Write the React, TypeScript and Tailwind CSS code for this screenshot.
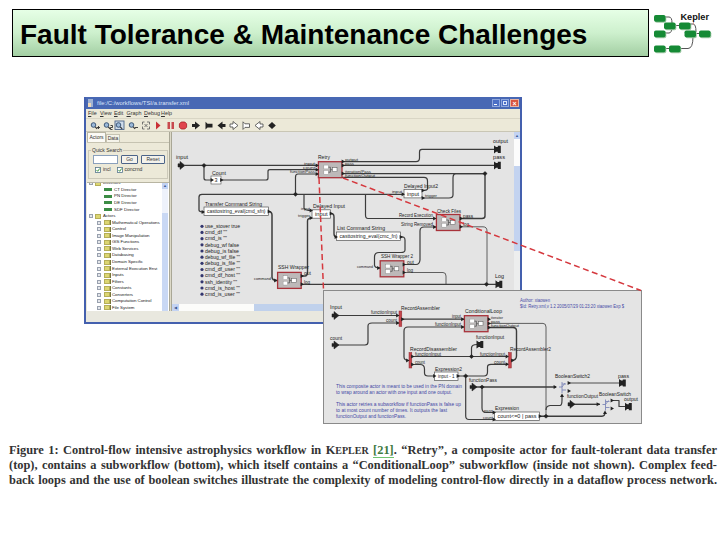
import type { ReactNode } from 'react';

const FONT = '"Liberation Sans", Arial, sans-serif';

/* ---------- diagram primitives ---------- */

interface LabelProps {
    x: number;
    y: number;
    w: number;
    children: string;
    size?: number;
    fill?: string;
}

// Text squeezed or stretched to a given width
const Label = ({ x, y, w, children, size = 5.4, fill = '#222' }: LabelProps) => (
    <text x={x} y={y} fontSize={size} fill={fill} fontFamily={FONT} textLength={w} lengthAdjust="spacingAndGlyphs">
        {children}
    </text>
);

const Wire = ({ d, w = 1.2 }: { d: string; w?: number }) => (
    <path d={d} fill="none" stroke="#3c3c3c" strokeWidth={w} strokeLinejoin="round" />
);

const Dot = ({ x, y }: { x: number; y: number }) => (
    <path d={`M${x - 2.2} ${y}l2.2 -2 2.2 2 -2.2 2z`} fill="#222" stroke="#222" strokeWidth="0.5" />
);

const Arrow = ({ x, y }: { x: number; y: number }) => (
    <path d={`M${x} ${y}l-3.4 -2v4z`} fill="#222" />
);

// Input port of a workflow
const Source = ({ x, y }: { x: number; y: number }) => (
    <path d={`M${x - 3} ${y - 1.6}h2v-2.4l5 4 -5 4v-2.4h-2z`} fill="#222" stroke="#222" strokeWidth="0.5" />
);

// Output port of a workflow
const Sink = ({ x, y }: { x: number; y: number }) => (
    <path d={`M${x - 0.5} ${y - 4}l2.2 1.6h1.600v-1.200h3v7.200h-3v-1.200h-1.600l-2.200 1.600z`} fill="#222" />
);

const Composite = ({ x, y }: { x: number; y: number }) => (
    <g>
        <rect x={x} y={y} width="23.6" height="16" fill="#bdb9b9" stroke="#a8323a" strokeWidth="1.3" />
        <path d={`M${x + 9} ${y + 5.5}h3v5h-3M${x + 12} ${y + 8}h3`} fill="none" stroke="#555" strokeWidth="0.8" />
        <rect x={x + 5.5} y={y + 3.4} width="4.4" height="3.8" fill="#fff" stroke="#777" strokeWidth="0.3" />
        <rect x={x + 5.5} y={y + 8.8} width="4.4" height="3.8" fill="#fff" stroke="#777" strokeWidth="0.3" />
        <rect x={x + 14} y={y + 6} width="4.6" height="4" fill="#fff" stroke="#555" strokeWidth="0.5" />
    </g>
);

const ValueBox = ({ x, y, w, text, pad = 3 }: { x: number; y: number; w: number; text: string; pad?: number }) => (
    <g>
        <rect x={x} y={y} width={w} height="8.4" fill="#fff" stroke="#555" strokeWidth="0.7" />
        <Label x={x + pad} y={y + 6} w={w - pad * 2} size={5}>{text}</Label>
    </g>
);

const RecordBar = ({ x, y }: { x: number; y: number }) => (
    <rect x={x} y={y} width="2.8" height="15.5" fill="#c5454c" stroke="#8e2b30" strokeWidth="0.5" />
);

const Switch = ({ x, y }: { x: number; y: number }) => (
    <path d={`M${x} ${y}v11M${x} ${y + 2}h4M${x} ${y + 8}h4M${x - 3} ${y + 5}h3l3 -4`} fill="none" stroke="#7d87b8" strokeWidth="0.9" />
);

/* ---------- main workflow ---------- */

const params = [
    'use_stover true', 'cmd_df ""', 'cmd_is ""', 'debug_wf false', 'debug_is false', 'debug_wf_file ""',
    'debug_is_file ""', 'cmd_df_user ""', 'cmd_df_host ""', 'ssh_identity ""', 'cmd_is_host ""', 'cmd_is_user ""',
];
const paramWidths = [35, 22, 22, 34, 34, 35, 35, 35, 35, 32, 35, 35];

const MainWorkflow = () => (
    <svg className="block" width="342" height="172" viewBox="172 132 342 172">
        <rect x="172" y="132" width="342" height="172" fill="#e4e4e4" />

        <Wire d="M185 165.4H318" />
        <Wire d="M204 165.4V178Q204 180 206 180H211" />
        <Wire d="M222 180H266Q268 180 268 178V171.500Q268 169.700 270 169.700H318" />
        <Wire d="M318 174H298Q295.500 174 295.500 177V194" />
        <Wire d="M404 194.300H202Q199 194.300 199 197V210Q199 212 204 212" w={1.3} />
        <Wire d="M304 194.300V208Q304 210.500 312 210.500" />
        <Wire d="M342 161.600H416Q419.500 161.600 419.500 158V152Q419.500 149.400 422 149.400H495" />
        <Wire d="M342 165.400H495" />
        <Wire d="M342 173.600H485V216Q485 218.500 482 218.500H460" w={1.4} />
        <Wire d="M342 177.400H424Q427.500 177.400 427.500 181V189Q427 190.500 422 190.500" />
        <Wire d="M485 173.600H456Q453 173.600 453 178V195Q453 198 449 198H423" />
        <Wire d="M365.500 194.300V215Q365.500 218.500 368 218.500H436" />
        <Wire d="M268 211.500Q272 211.500 272 215V277Q272 280.500 277 280.500" w={1.5} />
        <Wire d="M301 276H305Q307.500 276 307.500 272V221Q307.500 218 312 218" w={1.4} />
        <Wire d="M331 213.500Q334 213.500 334 217V234Q334 237 337 237" w={1.4} />
        <Wire d="M301 284.300H496" />
        <Wire d="M400 237Q405 236 405 240V250Q405 252.500 401 252.500H379Q374.500 252.500 374.500 257V265Q374.500 268 380 268" />
        <Wire d="M403 264.500H416Q419.500 264.500 420 260V231Q420 227 424 227H436" />
        <Wire d="M403 272.500H443Q446 272.500 446 276V284" w={0.8} />
        <Wire d="M460 226.800H483Q487 226.800 487 231V284" w={0.8} />

        <Dot x={204} y={165.4} />
        <Dot x={295.5} y={194.3} />
        <Dot x={485} y={173.6} />
        <Dot x={486.500} y={284.300} />
        <Source x={181} y={165.4} />
        <Label x={176} y={159} w={12}>input</Label>

        <Label x={212} y={174.500} w={14}>Count</Label>
        <rect x="211" y="176" width="10" height="8" fill="#fff" stroke="#555" strokeWidth="0.6" />
        <Label x={214.500} y={182} w={3}>3</Label>
        <Arrow x={214} y={180} />
        <Arrow x={223.500} y={180} />

        <Label x={318} y={158.500} w={12}>Retry</Label>
        <Label x={304} y={164.500} w={11} size={4.4}>input</Label>
        <Label x={303} y={169} w={12} size={4.4}>count</Label>
        <Label x={290} y={173} w={25} size={4.4}>functionPass</Label>
        <Composite x={318.400} y={161.700} />
        <Arrow x={319} y={165.400} />
        <Arrow x={319} y={169.700} />
        <Arrow x={319} y={174} />
        <Arrow x={345} y={161.600} />
        <Arrow x={345} y={165.400} />
        <Arrow x={345} y={173.600} />
        <Label x={345} y={160.500} w={13} size={4.4}>output</Label>
        <Label x={345} y={164.600} w={9} size={4.4}>pass</Label>
        <Label x={345} y={172.800} w={26} size={4.4}>iteration/Pass</Label>
        <Label x={345} y={176.500} w={30} size={4.4}>functionOutput</Label>

        <Label x={493} y={142.500} w={15}>output</Label>
        <Sink x={494.500} y={149.400} />
        <Label x={493} y={159} w={12}>pass</Label>
        <Sink x={494.500} y={165.400} />

        <Label x={205} y={205.500} w={57}>Transfer Command String</Label>
        <ValueBox x={204} y={207} w={64.500} text="casttostring_eval(cmd_sfn)" />
        <Arrow x={205} y={212} />
        <Arrow x={271} y={211.500} />
        {params.map((p, i) => (
            <g key={p}>
                <circle cx={202} cy={226.300 + i * 6.170} r={1.600} fill="#33366f" />
                <Label x={205} y={228 + i * 6.170} w={paramWidths[i]} size={5.2}>{p}</Label>
            </g>
        ))}

        <Label x={313} y={207.500} w={32}>Delayed Input</Label>
        <Label x={301} y={209.500} w={9} size={4}>input</Label>
        <Label x={298} y={217} w={12} size={4}>trigger</Label>
        <ValueBox x={312} y={209.800} w={18.500} text="input" />
        <Arrow x={313} y={210.500} />
        <Arrow x={313} y={218} />
        <Arrow x={333} y={213.500} />

        <Label x={404} y={187.500} w={34}>Delayed Input2</Label>
        <Label x={392} y={193} w={10} size={4.400}>input</Label>
        <ValueBox x={404} y={189.500} w={18} text="input" />
        <Arrow x={405} y={194.300} />
        <Arrow x={425} y={190.500} />
        <Arrow x={425} y={198} />
        <Label x={425} y={197} w={12} size={4.400}>trigger</Label>

        <Label x={437} y={213} w={24}>Check Files</Label>
        <Label x={399} y={217.300} w={34} size={4.700}>Record Execution</Label>
        <Label x={401} y={225.500} w={32} size={4.700}>String Removed</Label>
        <Composite x={436.400} y={214.500} />
        <Arrow x={436.500} y={218.500} />
        <Arrow x={436.500} y={227} />
        <Arrow x={463} y={218.500} />
        <Arrow x={463} y={226.800} />
        <Label x={463} y={217.500} w={10} size={4.700}>pass</Label>
        <Label x={463} y={225.800} w={6} size={4.700}>log</Label>

        <Label x={337} y={230} w={48}>List Command String</Label>
        <ValueBox x={336.500} y={232} w={64} text="casttostring_eval(cmc_fn)" />
        <Arrow x={338} y={237} />
        <Arrow x={403} y={237} />

        <Label x={278} y={269} w={31}>SSH Wrapper</Label>
        <Label x={254} y={279.800} w={17} size={4.400}>command</Label>
        <Composite x={277.600} y={272.400} />
        <Arrow x={277.500} y={280.500} />
        <Arrow x={304} y={276} />
        <Arrow x={304} y={284.300} />
        <Label x={304} y={275} w={7} size={4.700}>out</Label>
        <Label x={304} y={283.500} w={6} size={4.700}>log</Label>

        <Label x={381} y={258} w={32}>SSH Wrapper 2</Label>
        <Label x={357} y={267.500} w={16} size={4.400}>command</Label>
        <Composite x={380.200} y={260.800} />
        <Arrow x={380.500} y={268} />
        <Arrow x={406} y={264.500} />
        <Arrow x={406} y={272.500} />
        <Label x={407} y={263.500} w={7} size={4.700}>out</Label>
        <Label x={407} y={271.500} w={6} size={4.700}>log</Label>

        <Label x={495} y={278} w={9}>Log</Label>
        <Sink x={496} y={284.300} />
    </svg>
);

/* ---------- "Retry" subworkflow ---------- */

const BLUE = '#4347a5';

const RetryWorkflow = () => (
    <svg className="block" width="317" height="132" viewBox="324 291 317 132">
        <rect x="324" y="291" width="317" height="132" fill="#e4e4e4" />

        <Wire d="M338 315.500H400" />
        <Wire d="M338 345H365Q368 345 368 342V326Q368 323 372 323H400" />
        <Wire d="M402 319.200H464" />
        <Wire d="M464 327H408Q404 327 404 331V357Q404 360.500 409 360.500" />
        <Wire d="M412 356.500H508" />
        <Wire d="M412 364.500H420Q424.500 364.500 424.500 369V373Q424.500 376 428 376H434" />
        <Wire d="M471.500 356.500V348Q471.500 344.500 477 344.500" />
        <Wire d="M458 376H484Q487.500 376 487.500 372V367Q487.500 364.300 491 364.300H508" />
        <Wire d="M465.700 376V416Q465.700 419.500 469 419.500H494" />
        <Wire d="M475 387H556" w={1.400} />
        <Wire d="M482 387V408Q482 412.500 486 412.500H494" />
        <Wire d="M511 360.500Q516.500 360.500 516.500 356V331Q516.500 327.500 513 327.500H488" w={1.400} />
        <Wire d="M488 323.400H543Q546 323.400 546 327V416" w={0.800} />
        <Wire d="M540 416.200H602Q605 416.200 605 412" w={1.400} />
        <Wire d="M546 410Q546 406 550 405.500H560Q562 405.500 562 400V395" />
        <Wire d="M568 383H619" w={0.900} />
        <Wire d="M573 404.300H600" w={1.400} />
        <Wire d="M611 400.500H619V406.500H625" />

        <Label x={330} y={309} w={12}>Input</Label>
        <Source x={335} y={315.500} />
        <Label x={330} y={339.500} w={12}>count</Label>
        <Source x={335} y={345} />

        <Label x={401} y={310} w={39}>RecordAssembler</Label>
        <Label x={371} y={314} w={26} size={4.700}>functionInput</Label>
        <Label x={386} y={322.300} w={11} size={4.700}>count</Label>
        <RecordBar x={399} y={311} />
        <Arrow x={399.500} y={315.500} />
        <Arrow x={399.500} y={323} />
        <Arrow x={404.500} y={319.200} />

        <Label x={465} y={313} w={37}>ConditionalLoop</Label>
        <Label x={452} y={318} w={9} size={4.700}>input</Label>
        <Label x={435} y={326} w={26} size={4.700}>functionInput</Label>
        <Composite x={464.400} y={315.700} />
        <Arrow x={464.500} y={319.200} />
        <Arrow x={464.500} y={327} />
        <Arrow x={491} y={319.200} />
        <Arrow x={491} y={323.400} />
        <Arrow x={491} y={327.500} />
        <Label x={491} y={318.500} w={12} size={4}>iterator</Label>
        <Label x={491} y={322.500} w={9} size={4}>pass</Label>
        <Label x={491} y={326.600} w={28} size={4.400}>functionOutput</Label>

        <Label x={410} y={351} w={47}>RecordDisassembler</Label>
        <RecordBar x={409} y={352.500} />
        <Arrow x={409.500} y={360.500} />
        <Arrow x={414.500} y={356.500} />
        <Arrow x={414.500} y={364.500} />
        <Label x={415} y={355.800} w={26} size={4.700}>functionInput</Label>
        <Label x={415} y={363.500} w={10} size={4.700}>count</Label>

        <Dot x={471.500} y={356.500} />
        <Label x={476} y={338.500} w={28}>functionInput</Label>
        <Sink x={477} y={344.500} />

        <Label x={435} y={370.500} w={27}>Expression2</Label>
        <ValueBox x={434.500} y={372} w={23.500} text="input - 1" pad={3.500} />
        <Arrow x={436.500} y={376} />
        <Arrow x={460} y={376} />
        <Dot x={465.700} y={376} />

        <Label x={469} y={382} w={28}>functionPass</Label>
        <Source x={473} y={387} />
        <Dot x={482} y={387} />

        <Label x={510} y={350.500} w={41}>RecordAssembler2</Label>
        <Label x={480} y={355.500} w={25} size={4.700}>functionInput</Label>
        <Label x={494} y={363.500} w={11} size={4.700}>count</Label>
        <RecordBar x={508.500} y={352.500} />
        <Arrow x={509} y={356.500} />
        <Arrow x={509} y={364.300} />
        <Arrow x={514.500} y={360.500} />

        <Label x={495} y={410} w={24}>Expression</Label>
        <Label x={484} y={411.500} w={9} size={4}>pass</Label>
        <Label x={483} y={418.600} w={10} size={4}>count</Label>
        <ValueBox x={494.500} y={412} w={45} text="count<=0 | pass" />
        <Arrow x={496} y={412.500} />
        <Arrow x={496} y={419.500} />
        <Arrow x={542} y={416.200} />
        <Dot x={546} y={416.200} />

        <Label x={555} y={378} w={35}>BooleanSwitch2</Label>
        <Switch x={562} y={382} />
        <Arrow x={557} y={387} />
        <Arrow x={571} y={383} />
        <Arrow x={571} y={391} />
        <path d="M562 393.500l-2 3.600h4z" fill="#222" />
        <Label x={618} y={377.500} w={11}>pass</Label>
        <Sink x={619.500} y={383} />

        <Label x={567} y={398.300} w={31}>functionOutput</Label>
        <Source x={571} y={404.300} />
        <Arrow x={600} y={404.300} />
        <Label x={599} y={395.500} w={32}>BooleanSwitch</Label>
        <Switch x={605.500} y={399.500} />
        <Arrow x={614} y={400.500} />
        <Arrow x={614} y={408.500} />
        <path d="M605 410.500l-2 3.600h4z" fill="#222" />
        <Label x={624} y={401} w={14}>output</Label>
        <Sink x={625.500} y={406.700} />

        <Label x={520} y={302} w={30} size={5} fill={BLUE}>Author: xiaowen</Label>
        <Label x={520} y={307.500} w={104} size={5} fill={BLUE}>$Id: Retry.xml,v 1.2 2005/07/29 01:23:20 xiaowen Exp $</Label>

        <Label x={336} y={388} w={126} fill={BLUE}>This composite actor is meant to be used in the PN domain</Label>
        <Label x={336} y={394} w={116} fill={BLUE}>to wrap around an actor with one input and one output.</Label>
        <Label x={336} y={405.500} w={125} fill={BLUE}>This actor retries a subworkflow if functionPass is false up</Label>
        <Label x={336} y={411.500} w={111} fill={BLUE}>to at most count number of times. It outputs the last</Label>
        <Label x={336} y={417.500} w={70} fill={BLUE}>functionOutput and functionPass.</Label>
    </svg>
);

/* ---------- window chrome ---------- */

const Magnifier = ({ mark }: { mark: string }) => (
    <>
        <circle cx="4.5" cy="5" r="2.3" fill="#9bb9d9" stroke="#3d5878" strokeWidth="1" />
        <path d="M6.200 6.800l2 2" stroke="#333" strokeWidth="1.200" />
        <path d={mark} stroke="#333" strokeWidth="0.900" fill="none" />
    </>
);

const toolIcons: ReactNode[] = [
    <Magnifier mark="M8 7.500h3M9.500 6v3" />,
    <Magnifier mark="M8.500 5.500h2v2h-2v2h2" />,
    <>
        <rect x="1" y="1" width="9" height="8.500" fill="#cfdcea" stroke="#4b6487" strokeWidth="0.900" />
        <Magnifier mark="" />
    </>,
    <Magnifier mark="M8 7.500h3" />,
    <path d="M2.500 4.500v-2.500h2M7 2h2.500v2.500M9.500 6.500v2.500h-2.500M4.500 9h-2v-2.500M4.500 4l3 3M7.500 4l-3 3" fill="none" stroke="#666" strokeWidth="0.900" />,
    <path d="M4 1.500l4.500 4 -4.500 4z" fill="#c92f35" />,
    <path d="M2.500 2h2.500v7h-2.500zM6.500 2h2.500v7h-2.500z" fill="#c84a4e" />,
    <path d="M4.200 2h3.600l1.800 1.800v3.400l-1.800 1.800h-3.600l-1.800 -1.800v-3.400z" fill="#e0454c" stroke="#a52026" strokeWidth="0.800" />,
    <path d="M2 4h3v-2.500l5 4 -5 4v-2.500h-3z" fill="#222" />,
    <path d="M2.500 1.800l2 2h5v3.600h-5l-2 2z" fill="#222" />,
    <path d="M10.500 4h-3v-2.500l-5 4 5 4v-2.500h3z" fill="#222" />,
    <path d="M2 4h3v-2.500l5 4 -5 4v-2.500h-3z" fill="#fff" stroke="#444" strokeWidth="0.800" />,
    <path d="M3 1.800l2 2h4.500v3.600h-4.500l-2 2z" fill="#fff" stroke="#444" strokeWidth="0.800" />,
    <path d="M10 4h-3v-2.500l-5 4 5 4v-2.500h3z" fill="#fff" stroke="#444" strokeWidth="0.800" />,
    <path d="M2.200 5.500l3.800 -3.600 3.800 3.600 -3.800 3.600z" fill="#222" />,
];

const menus = [
    { name: 'File', width: 12 },
    { name: 'View', width: 14 },
    { name: 'Edit', width: 12.5 },
    { name: 'Graph', width: 17.5 },
    { name: 'Debug', width: 17 },
    { name: 'Help', width: 12 },
];

const directors = ['CT Director', 'PN Director', 'DE Director', 'SDF Director'];
const actorFolders = [
    'Mathematical Operations', 'Control', 'Image Manipulation', 'GIS Functions', 'Web Services', 'Databasing',
    'Domain Specific', 'External Execution Envi', 'Inputs', 'Filters', 'Constants', 'Converters',
    'Computation Control', 'File System',
];

const Expander = () => (
    <span className="flex size-[4px] shrink-0 items-center justify-center border border-gray-400 bg-gray-200" />
);

const Folder = () => (
    <span className="h-[5px] w-[6px] shrink-0 border border-[#b5ae58] bg-[#dcd672]" />
);

const TreeRow = ({ children, className }: { children: ReactNode; className: string }) => (
    <div className={`flex h-[6.57px] shrink-0 items-center whitespace-nowrap ${className}`}>{children}</div>
);

const CheckOption = ({ label }: { label: string }) => (
    <span className="flex items-center gap-[2px]">
        <svg width="6" height="6" viewBox="0 0 6 6">
            <rect x="0.5" y="0.5" width="5" height="5" fill="#fff" stroke="#55778c" strokeWidth="0.8" />
            <path d="M1.500 3l1.200 1.300 2 -2.800" fill="none" stroke="#2b8a2b" strokeWidth="0.900" />
        </svg>
        {label}
    </span>
);

const Sidebar = () => (
    <div className="flex w-[83px] shrink-0 flex-col pl-[1px]">
        <div className="flex h-[10px] items-end text-[5px]">
            <span className="flex h-[10px] w-[19px] items-center justify-center border-x border-t border-[#b8b5a2] bg-[#fbfaf5]">Actors</span>
            <span className="flex h-[8px] w-[14px] items-center justify-center border-x border-t border-[#c6c3b1] bg-[#f5f3e9]">Data</span>
        </div>
        <div className="flex h-[40px] shrink-0 flex-col border-t border-[#c6c3b1] px-[1px] pt-[5px]">
            <fieldset className="h-[31px] border border-[#ccc9b9] pt-[2px] pl-[4px] text-[5px]">
                <legend className="-ml-[2px] h-[5px] px-[1px] leading-[5px]">Quick Search</legend>
                <div className="flex h-[9px] gap-[3px]">
                    <span className="w-[25px] border border-[#8aa0bc] bg-white" />
                    <span className="flex w-[17px] items-center justify-center rounded-[1px] border border-[#4c6489] bg-[#f3f2ec]">Go</span>
                    <span className="flex w-[24px] items-center justify-center rounded-[1px] border border-[#4c6489] bg-[#f3f2ec]">Reset</span>
                </div>
                <div className="mt-[2px] flex h-[7px] items-center gap-[6px] pl-[2px]">
                    <CheckOption label="incl" />
                    <CheckOption label="concrnd" />
                </div>
            </fieldset>
        </div>
        <div className="flex h-[129px] border-t border-[#b8b5a2] bg-white">
            <div className="flex w-[75px] flex-col overflow-hidden text-[4.4px] leading-[6px] text-[#222]">
                <TreeRow className="-mt-[3px] gap-[2px] pl-[2px]"><Expander /><Folder />Directors</TreeRow>
                {directors.map((name) => (
                    <TreeRow key={name} className="gap-[2px] pl-[17px]">
                        <span className="h-[3px] w-[8px] bg-[#3c8c45]" />
                        {name}
                    </TreeRow>
                ))}
                <TreeRow className="gap-[2px] pl-[2px]"><Expander /><Folder />Actors</TreeRow>
                {actorFolders.map((name) => (
                    <TreeRow key={name} className="gap-[1px] pl-[10px] tracking-[-0.05px]">
                        <Expander />
                        <span className="ml-[2px] flex border-r border-[#77753a]"><Folder /></span>
                        {name}
                    </TreeRow>
                ))}
            </div>
            <div className="flex w-[6px] flex-col bg-[#eef2fb]">
                <div className="flex h-[6px] items-center justify-center bg-[#c3d3f3] text-[4px] text-[#3d5a95]">▲</div>
                <div className="mt-[24px] flex-1 bg-[#c9d8f4]" />
            </div>
        </div>
    </div>
);

const AppWindow = () => (
    <div className="flex h-[227px] w-[438px] flex-col border-2 border-t-0 border-[#4460ae] bg-[#ece9d8] text-[#333]">
        <div className="flex h-[12px] shrink-0 items-center bg-[#4868b4] pl-[2px] text-[5.9px] text-[#dbe4fa]">
            <span className="mr-[4px] flex h-[8px] w-[5px] items-end bg-[#9fb2d3]">
                <span className="h-[4px] w-[3px] bg-[#f0d9b8]" />
            </span>
            file:/C:/workflows/TSI/a.transfer.xml
            <div className="ml-auto flex gap-[1px] pr-[1px]">
                <span className="flex h-[8px] w-[8px] items-end border border-[#8ea6dc] bg-[#4b6fc6] p-[1px]"><span className="h-[1px] w-[3px] bg-white" /></span>
                <span className="flex h-[8px] w-[8px] border border-[#8ea6dc] bg-[#4b6fc6] p-[1px]"><span className="flex-1 border border-[#dbe4fa]" /></span>
                <span className="flex h-[8px] w-[9px] items-center justify-center border border-[#e8b4a4] bg-[#d9553e] text-[7px] leading-none font-bold text-white">×</span>
            </div>
        </div>
        <div className="flex h-[9px] shrink-0 items-center pl-[2px] text-[5.4px]">
            {menus.map((m) => (
                <span key={m.name} className="shrink-0" style={{ width: m.width }}>
                    <span className="underline">{m.name[0]}</span>{m.name.slice(1)}
                </span>
            ))}
        </div>
        <div className="flex h-[14px] shrink-0 items-center border-t border-b border-t-[#d9d6c5] border-b-[#c9c6b5] pl-[3px]">
            {toolIcons.map((icon, i) => (
                <span key={i} className="flex w-[12.6px] shrink-0 justify-center">
                    <svg width="12" height="11" viewBox="0 0 12 11">{icon}</svg>
                </span>
            ))}
        </div>
        <div className="flex h-[179px] shrink-0">
            <Sidebar />
            <div className="w-[3px] border-x border-[#a9a796] bg-[#dddac9]" />
            <div className="flex flex-col">
                <MainWorkflow />
                <div className="flex h-[7px] bg-[#fcfcfa]">
                    <span className="flex w-[7px] items-center justify-center bg-[#c3d3f3] text-[4px] text-[#3d5a95]">◀</span>
                    <span className="ml-[75px] flex-1 bg-[#c0d1ec]" />
                </div>
            </div>
            <div className="flex w-[6px] flex-col bg-[#edeeee]">
                <span className="flex h-[7px] items-center justify-center bg-[#c3d3f3] text-[4px] text-[#3d5a95]">▲</span>
                <span className="h-[27px] bg-[#fcfcfc]" />
                <span className="h-[85px] bg-[#c3d3f0]" />
            </div>
        </div>
        <div className="flex-1 bg-[#e9e8df]" />
    </div>
);

/* ---------- slide ---------- */

const logoNodes = [
    [654, 15], [664, 22.500], [679, 22.500], [654, 30.500], [684.500, 30.500], [699, 30.500], [654, 45.500], [669, 45.500],
];

const KeplerLogo = () => (
    <svg className="block" width="71" height="57" viewBox="649 0 71 57">
        <path d="M664 17h5q3 0 3 6M664 33h5q3 0 3 -7M674 25.500h6M689 24h4q3 0 3 8M694 33.500h6M662 48.500h10M680 48.500h8q5 0 5 -12" fill="none" stroke="#555" strokeWidth="1" />
        {logoNodes.map(([x, y]) => (
            <g key={`${x}-${y}`}>
                <rect x={x + 0.800} y={y + 0.800} width="11.500" height="7" rx="2" fill="#9fc7a5" />
                <rect x={x} y={y} width="11.500" height="6.800" rx="1.800" fill="#158a35" />
            </g>
        ))}
        <path d="M693.500 20v5" stroke="#c98a8a" strokeWidth="0.800" />
        <text x="680.500" y="19.500" fontSize="9" fontWeight="bold" fill="#111" fontFamily={FONT} textLength="28.500" lengthAdjust="spacingAndGlyphs">Kepler</text>
    </svg>
);

export default function App() {
    return (
        <div className="flex h-[540px] w-[720px] flex-col overflow-hidden bg-white font-['Liberation_Sans',Arial,sans-serif]">
            <header className="flex h-[57px] shrink-0 items-end pl-[12px]">
                <h1 className="flex h-[48px] w-[637px] items-center border border-black bg-linear-to-b from-[#e6ffe6] via-[#cdf0cd] to-[#a3cfa3] pt-[3px] pl-[7px] text-[28px] font-bold whitespace-nowrap text-black">
                    Fault Tolerance &amp; Maintenance Challenges
                </h1>
                <KeplerLogo />
            </header>

            <figure className="flex flex-1 flex-col">
                <div className="relative h-[386px] pt-[40px] pl-[84px]">
                    <AppWindow />
                    <div className="absolute top-[233px] left-[323px] border border-[#8a8a8a]">
                        <RetryWorkflow />
                    </div>
                    {/* dashed guides from the Retry actor to the corners of its subworkflow */}
                    <svg className="absolute top-0 left-0" width="720" height="240" viewBox="0 57 720 240">
                        <path d="M319 178L323.500 290M343 178L641 290.500" fill="none" stroke="#d5383e" strokeWidth="1.500" strokeDasharray="6 3.500" />
                    </svg>
                </div>
                <figcaption className="flex flex-col pr-[3px] pl-[9px] font-['Liberation_Serif',serif] text-[12.400px] leading-[15px] font-bold text-[#333]">
                    <p className="h-[15px] whitespace-nowrap [text-align-last:justify]">
                        Figure 1: Control-flow intensive astrophysics workflow in K<span className="text-[10px] leading-none">EPLER</span>{' '}
                        <span className="border-b border-[#6fc46f] text-[#3f7a3f]">[21]</span>. “Retry”, a composite actor for fault-tolerant data transfer
                    </p>
                    <p className="h-[15px] whitespace-nowrap [text-align-last:justify]">
                        (top), contains a subworkflow (bottom), which itself contains a “ConditionalLoop” subworkflow (inside not shown). Complex feed-
                    </p>
                    <p className="h-[15px] whitespace-nowrap [text-align-last:justify]">
                        back loops and the use of boolean switches illustrate the complexity of modeling control-flow directly in a dataflow process network.
                    </p>
                </figcaption>
            </figure>
        </div>
    );
}
